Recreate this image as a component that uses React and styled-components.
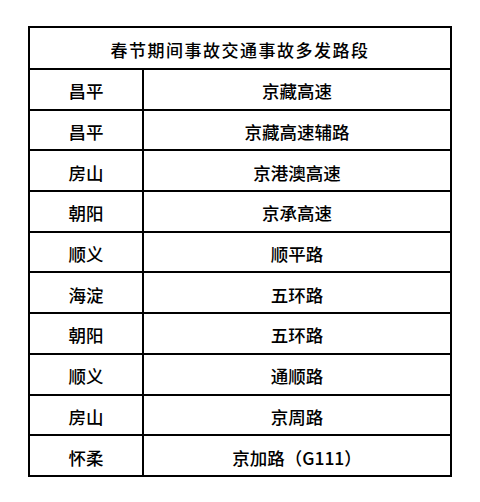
import styled, { createGlobalStyle } from "styled-components";

const GlobalStyle = createGlobalStyle`
  html, body {
    margin: 0;
    padding: 0;
    background: #ffffff;
  }
  body {
    font-family: "Noto Sans CJK SC", "Noto Sans", sans-serif;
    color: #000000;
  }
`;

const rows = [
  ["昌平", "京藏高速"],
  ["昌平", "京藏高速辅路"],
  ["房山", "京港澳高速"],
  ["朝阳", "京承高速"],
  ["顺义", "顺平路"],
  ["海淀", "五环路"],
  ["朝阳", "五环路"],
  ["顺义", "通顺路"],
  ["房山", "京周路"],
  ["怀柔", "京加路（G111）"],
];

const Page = styled.div`
  padding: 26px 28px 0 28px;
`;

const Table = styled.table`
  width: 424px;
  border-collapse: collapse;
  border: 2px solid #000;
  table-layout: fixed;
`;

const Col = styled.col`
  width: ${(p) => p.$width || "auto"};
`;

const HeadCell = styled.th`
  height: 37px;
  padding: 3px 0 0;
  border: 2px solid #000;
  font-size: 17px;
  font-weight: 500;
  letter-spacing: 1.5px;
  text-align: center;
  vertical-align: middle;
`;

const Cell = styled.td`
  height: 35.7px;
  padding: 3px 0 0;
  border: 2px solid #000;
  font-size: 17.5px;
  font-weight: 500;
  text-align: center;
  vertical-align: middle;
`;

export default function App() {
  return (
    <>
      <GlobalStyle />
      <Page>
        <Table>
          <colgroup>
            <Col $width="114px" />
            <Col />
          </colgroup>
          <thead>
            <tr>
              <HeadCell colSpan={2}>春节期间事故交通事故多发路段</HeadCell>
            </tr>
          </thead>
          <tbody>
            {rows.map(([district, road], i) => (
              <tr key={i}>
                <Cell>{district}</Cell>
                <Cell>{road}</Cell>
              </tr>
            ))}
          </tbody>
        </Table>
      </Page>
    </>
  );
}
